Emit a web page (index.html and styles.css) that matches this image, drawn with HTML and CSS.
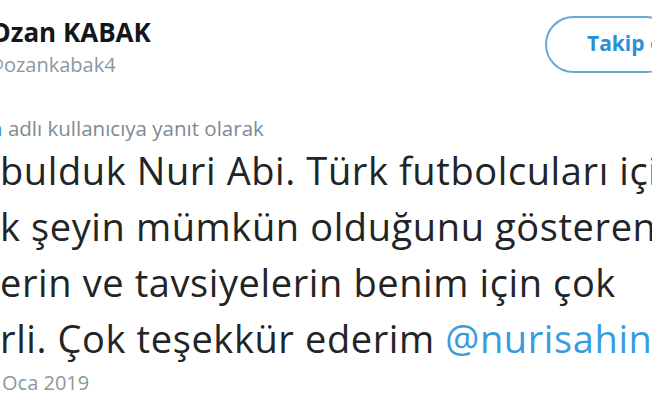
FILE: index.html
```html
<!DOCTYPE html>
<html lang="tr">
<head>
    <meta charset="UTF-8">
    <title>Ozan KABAK</title>
    <link rel="stylesheet" href="styles.css">
</head>
<body>
    <div class="tweet">
        <div class="header">
            <div class="user">
                <div class="name">Ozan KABAK</div>
                <div class="handle">@ozankabak4</div>
            </div>
            <button class="follow">Takip et</button>
        </div>

        <div class="reply"><span class="link">n</span> adlı kullanıcıya yanıt olarak</div>

        <div class="text">
            <div class="line l1">bulduk Nuri Abi. Türk futbolcuları için</div>
            <div class="line l2">k şeyin mümkün olduğunu gösteren</div>
            <div class="line l3">erin ve tavsiyelerin benim için çok</div>
            <div class="line l4">rli. Çok teşekkür ederim <span class="link">@nurisahin</span></div>
        </div>

        <div class="date">Oca 2019</div>
    </div>
</body>
</html>
```

FILE: styles.css
```css
body {
    margin: 0;
    background-color: #fff;
    font-family: 'Open Sans', 'Noto Sans', sans-serif;
    overflow: hidden;
}

.tweet {
    width: 652px;
    height: 400px;
    overflow: hidden;
}

.header {
    display: flex;
    justify-content: space-between;
    align-items: flex-start;
    padding-top: 16px;
}

.user {
    margin-left: -10px;
}

.name {
    font-size: 26px;
    font-weight: 700;
    color: #14171a;
    line-height: 32px;
}

.handle {
    font-size: 20px;
    color: #8b98a3;
    line-height: 30px;
    margin-top: 2px;
    margin-left: -4px;
}

.follow {
    width: 130px;
    height: 57px;
    margin-right: -23px;
    padding: 0 0 4px 40px;
    text-align: left;
    border: 2px solid #6aa9d6;
    border-radius: 29px;
    background-color: #fff;
    color: #2b90d6;
    font-family: inherit;
    font-size: 21px;
    font-weight: 700;
    white-space: nowrap;
}

.reply {
    margin-top: 36px;
    margin-left: -10px;
    font-size: 20.5px;
    color: #7d8a95;
    line-height: 24px;
}

.link {
    color: #3a9bdc;
}

.text {
    margin-top: 2px;
    color: #222426;
    font-size: 38px;
    letter-spacing: 0.6px;
    line-height: 56px;
}

.line {
    white-space: nowrap;
}

.date {
    margin-top: 3px;
    font-size: 20px;
    color: #8b98a3;
    line-height: 28px;
    padding-left: 2px;
}
```
